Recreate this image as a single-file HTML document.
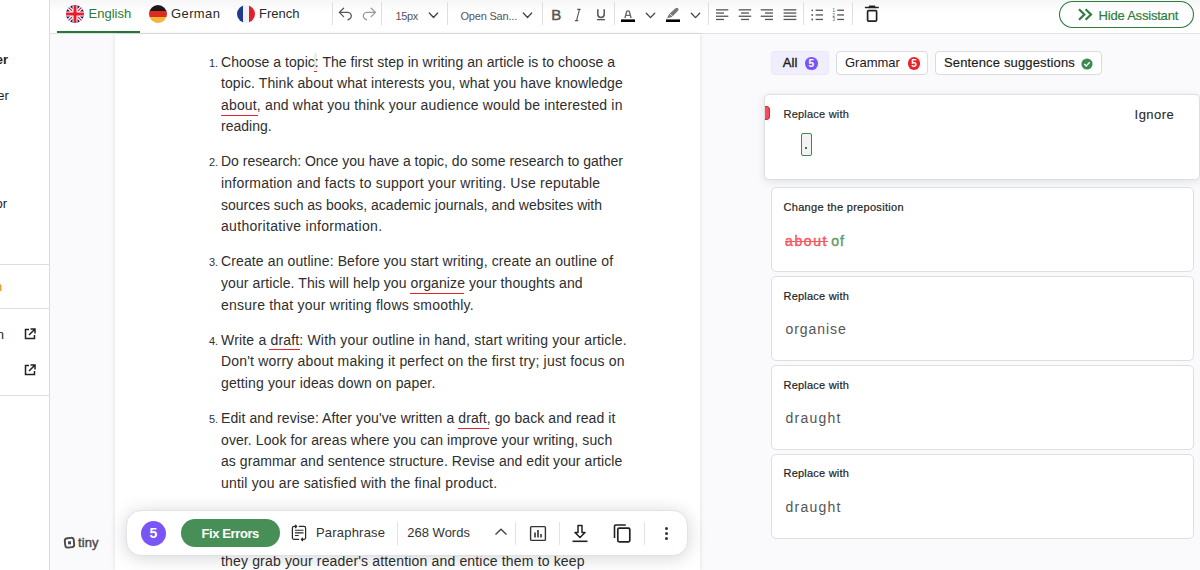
<!DOCTYPE html>
<html><head><meta charset="utf-8">
<style>
*{box-sizing:border-box;margin:0;padding:0}
html,body{width:1200px;height:570px;overflow:hidden;background:#fff;font-family:"Liberation Sans",sans-serif;color:#222}
.a{position:absolute}
#side{left:0;top:0;width:49px;height:570px;background:#fff}
#sideb{left:49px;top:0;width:1px;height:570px;background:#d9dce0}
.sep{height:1px;background:#dcdee2}
#tb{left:50px;top:0;width:1150px;height:33px;background:linear-gradient(#f6f6f7,#fff 12px)}
#tbb{left:50px;top:33px;width:1150px;height:1px;background:#dfe1e5}
#gray{left:50px;top:34px;width:1150px;height:536px;background:#fafafc}
#page{left:115px;top:34px;width:585px;height:536px;background:#fff;box-shadow:0 0 4px rgba(0,0,0,.12)}
.vs{width:1px;height:23px;top:2px;background:#dcdfe3}
.tt{font-size:14px;white-space:nowrap}
.t{white-space:nowrap;line-height:1}
.ln{position:absolute;left:221px;white-space:nowrap;font-size:14px;line-height:21.43px;height:21.43px;color:#2e2e2e}
.num{position:absolute;font-size:11px;color:#333;white-space:nowrap}
.ul{position:absolute;height:1px;background:#e8242b}
.chip{position:absolute;top:51px;height:24px;border-radius:4px;font-size:13px;white-space:nowrap}
.card{position:absolute;background:#fff;border:1px solid #dcdfe3;border-radius:5px}
.ct{position:absolute;left:11px;font-size:11.5px;color:#1e1e1e;white-space:nowrap}
.cw{position:absolute;left:13px;font-size:14.5px;color:#555;white-space:nowrap;letter-spacing:.3px}
</style></head><body>
<!-- left sidebar -->
<div id="side" class="a"></div>
<div id="sideb" class="a"></div>
<div class="a t" style="left:-4.3px;top:52.7px;font-size:13px;font-weight:bold;color:#1d1d1d">er</div>
<div class="a t" style="left:-2.8px;top:89px;font-size:13px;color:#1d1d1d">er</div>
<div class="a t" style="left:-4.5px;top:197px;font-size:13px;color:#1d1d1d">or</div>
<div class="a sep" style="left:0;top:264px;width:49px"></div>
<div class="a t" style="left:-5px;top:280px;font-size:13px;color:#e8870f">n</div>
<div class="a sep" style="left:0;top:308px;width:49px"></div>
<div class="a t" style="left:-3.2px;top:328.2px;font-size:13px;color:#1d1d1d">n</div>
<svg class="a" style="left:24px;top:328px" width="12" height="12" viewBox="0 0 12 12"><path d="M5 1.5H1.5v9h9V7" fill="none" stroke="#222" stroke-width="1.5"/><path d="M6.5 1h4.5v4.5M11 1L5 7" fill="none" stroke="#222" stroke-width="1.5"/></svg>
<svg class="a" style="left:24px;top:364px" width="12" height="12" viewBox="0 0 12 12"><path d="M5 1.5H1.5v9h9V7" fill="none" stroke="#222" stroke-width="1.5"/><path d="M6.5 1h4.5v4.5M11 1L5 7" fill="none" stroke="#222" stroke-width="1.5"/></svg>
<div class="a sep" style="left:0;top:395px;width:49px"></div>

<!-- toolbar -->
<div id="tb" class="a"></div>
<div id="tbb" class="a"></div>
<svg class="a" style="left:0;top:0" width="1200" height="34" viewBox="0 0 1200 34">
<defs><clipPath id="cUK"><circle cx="75" cy="14" r="9"/></clipPath><clipPath id="cDE"><circle cx="158" cy="14" r="9"/></clipPath><clipPath id="cFR"><circle cx="246" cy="14" r="9"/></clipPath></defs>
<g clip-path="url(#cUK)"><rect x="66" y="5" width="18" height="18" fill="#17195c"/><path d="M66 5L84 23M84 5L66 23" stroke="#fff" stroke-width="3.5"/><path d="M66 5L84 23M84 5L66 23" stroke="#e5202e" stroke-width="1.2"/><path d="M75 5V23M66 14H84" stroke="#fff" stroke-width="5"/><path d="M75 5V23M66 14H84" stroke="#e5202e" stroke-width="3"/></g>
<g clip-path="url(#cDE)"><rect x="149" y="5" width="18" height="6" fill="#1a1a1a"/><rect x="149" y="11" width="18" height="6" fill="#dd2c1e"/><rect x="149" y="17" width="18" height="6" fill="#f5b53a"/></g>
<g clip-path="url(#cFR)"><rect x="237" y="5" width="6" height="18" fill="#1f3a93"/><rect x="243" y="5" width="6" height="18" fill="#f2f2f2"/><rect x="249" y="5" width="6" height="18" fill="#e5202e"/></g>
<rect x="57" y="31" width="83" height="2" fill="#237a35"/>
<g fill="#dcdfe3"><rect x="332" y="2" width="1" height="23"/><rect x="381" y="2" width="1" height="23"/><rect x="447" y="2" width="1" height="23"/><rect x="542" y="2" width="1" height="23"/><rect x="614" y="2" width="1" height="23"/><rect x="708" y="2" width="1" height="23"/><rect x="803" y="2" width="1" height="23"/><rect x="852" y="2" width="1" height="23"/></g>
<g fill="none" stroke-width="1.3" stroke-linecap="round" stroke-linejoin="round">
<path d="M343.6 8.2L339.3 12.4L343.6 16.6M339.5 12.4H347A3.5 3.5 0 0 1 348.4 19.4L348 19.9" stroke="#555"/>
<path d="M371.2 8.2L375.5 12.4L371.2 16.6M375.3 12.4H367.6A3.5 3.5 0 0 0 366.2 19.4L366.6 19.9" stroke="#999"/>
<path d="M429.3 13L433.5 17.5L437.7 13" stroke="#444"/>
<path d="M523.3 13L527.5 17.5L531.7 13" stroke="#444"/>
<path d="M646.3 13.2L650.5 17.6L654.7 13.2" stroke="#444"/>
<path d="M691.3 13.2L695.5 17.6L699.7 13.2" stroke="#444"/>
</g>
<path d="M580.6 9.4H577.2M579.5 9.4L576.5 20.6M578.3 20.6H574.9" fill="none" stroke="#555" stroke-width="1.1"/>
<path d="M597.8 9.3V14.3a3.2 3.2 0 0 0 6.4 0V9.3" fill="none" stroke="#555" stroke-width="1.5"/>
<rect x="597" y="19" width="8" height="1.3" fill="#555"/>
<path d="M624.9 18L626.6 11.8Q627 10.8 628 10.8Q629 10.8 629.4 11.8L631.1 18M625.6 15.4H630.4" fill="none" stroke="#666" stroke-width="1.35"/>
<rect x="621" y="19.4" width="14" height="2.6" fill="#000"/>
<path d="M667 18.3L669.2 13.9L675.5 8.3a1.7 1.7 0 0 1 2.5 2.5L672 17L667 18.3Z" fill="#777"/>
<path d="M669.6 13.7L673.2 16.9" stroke="#fff" stroke-width=".8"/>
<rect x="666" y="19.4" width="14" height="2.6" fill="#000"/>
<g fill="#555">
<rect x="716" y="9.2" width="12.3" height="1.3"/><rect x="716" y="12.4" width="8" height="1.3"/><rect x="716" y="15.6" width="12.3" height="1.3"/><rect x="716" y="18.8" width="8" height="1.3"/>
<rect x="738.7" y="9.2" width="12.5" height="1.3"/><rect x="741" y="12.4" width="8" height="1.3"/><rect x="738.7" y="15.6" width="12.5" height="1.3"/><rect x="741" y="18.8" width="8" height="1.3"/>
<rect x="760.7" y="9.2" width="12.3" height="1.3"/><rect x="765" y="12.4" width="8" height="1.3"/><rect x="760.7" y="15.6" width="12.3" height="1.3"/><rect x="765" y="18.8" width="8" height="1.3"/>
<rect x="783.6" y="9.2" width="12.7" height="1.3"/><rect x="783.6" y="12.4" width="12.7" height="1.3"/><rect x="783.6" y="15.6" width="12.7" height="1.3"/><rect x="783.6" y="18.8" width="12.7" height="1.3"/>
<circle cx="812.2" cy="10.3" r=".9"/><circle cx="812.2" cy="15" r=".9"/><circle cx="812.2" cy="19.5" r=".9"/>
<rect x="815.6" y="9.6" width="7.4" height="1.3"/><rect x="815.6" y="14.3" width="7.4" height="1.3"/><rect x="815.6" y="18.8" width="7.4" height="1.3"/>
<rect x="837.2" y="9.6" width="6.8" height="1.3"/><rect x="837.2" y="14.3" width="6.8" height="1.3"/><rect x="837.2" y="18.8" width="6.8" height="1.3"/>
</g>
<text x="832.6" y="12" font-family="Liberation Sans" font-size="4.5" fill="#555">1</text><text x="832.4" y="16.6" font-family="Liberation Sans" font-size="4.5" fill="#555">2</text><text x="832.4" y="21" font-family="Liberation Sans" font-size="4.5" fill="#555">3</text>
<path d="M865.5 7.5H878.2M869.5 6.3H874.6" stroke="#222" stroke-width="1.5" stroke-linecap="round"/>
<rect x="867.6" y="10.6" width="9" height="10.5" rx="1" fill="none" stroke="#222" stroke-width="1.7"/>
<rect x="1059.5" y="1.5" width="134" height="26" rx="13" fill="none" stroke="#2e7d3e" stroke-width="1.1"/>
<path d="M1079 9.2L1084.4 14.5L1079 19.8M1085.6 9.2L1091 14.5L1085.6 19.8" fill="none" stroke="#2e7d3e" stroke-width="2.2"/>
</svg>
<div class="a t" style="left:88.5px;top:7px;font-size:13px;color:#2b7a38">English</div>
<div class="a t" style="left:171px;top:7px;font-size:13px;color:#2a2a2a;letter-spacing:.4px">German</div>
<div class="a t" style="left:259px;top:7px;font-size:13px;color:#2a2a2a">French</div>
<div class="a t" style="left:395.5px;top:10.5px;font-size:11px;color:#555;letter-spacing:-.4px">15px</div>
<div class="a t" style="left:460.5px;top:10.5px;font-size:11px;color:#555;letter-spacing:-.2px">Open San...</div>
<div class="a t" style="left:551.3px;top:7.4px;font-size:15px;color:#555;-webkit-text-stroke:.45px #555">B</div>
<div class="a t" style="left:1098.5px;top:9px;font-size:13px;color:#2e7d3e;letter-spacing:-.2px;-webkit-text-stroke:.2px #2e7d3e">Hide Assistant</div>
<div id="gray" class="a"></div>
<div id="page" class="a"></div>

<!-- editor text -->
<div id="text">

<div class="a" style="left:314px;top:53px;width:3px;height:17px;background:#ececec"></div>
<div class="ul" style="left:221px;top:115px;width:37px"></div>
<div class="ul" style="left:314px;top:71px;width:3px"></div>
<div class="ul" style="left:410px;top:293px;width:54px"></div>
<div class="ul" style="left:269px;top:349px;width:31px"></div>
<div class="ul" style="left:458px;top:428px;width:31px"></div>
<div class="ln" style="top:51.93px;letter-spacing:0.031px">Choose a topic: The first step in writing an article is to choose a</div>
<div class="ln" style="top:72.93px;letter-spacing:0.097px">topic. Think about what interests you, what you have knowledge</div>
<div class="ln" style="top:94.93px;letter-spacing:0.163px">about, and what you think your audience would be interested in</div>
<div class="ln" style="top:115.93px;letter-spacing:0.013px">reading.</div>
<div class="ln" style="top:150.93px;letter-spacing:-0.007px">Do research: Once you have a topic, do some research to gather</div>
<div class="ln" style="top:172.93px;letter-spacing:0.213px">information and facts to support your writing. Use reputable</div>
<div class="ln" style="top:194.93px;letter-spacing:-0.005px">sources such as books, academic journals, and websites with</div>
<div class="ln" style="top:215.93px;letter-spacing:0.311px">authoritative information.</div>
<div class="ln" style="top:250.93px;letter-spacing:0.119px">Create an outline: Before you start writing, create an outline of</div>
<div class="ln" style="top:272.93px;letter-spacing:0.094px">your article. This will help you organize your thoughts and</div>
<div class="ln" style="top:294.93px;letter-spacing:0.221px">ensure that your writing flows smoothly.</div>
<div class="ln" style="top:329.93px;letter-spacing:0.180px">Write a draft: With your outline in hand, start writing your article.</div>
<div class="ln" style="top:350.93px;letter-spacing:0.190px">Don&#39;t worry about making it perfect on the first try; just focus on</div>
<div class="ln" style="top:372.93px;letter-spacing:0.129px">getting your ideas down on paper.</div>
<div class="ln" style="top:407.93px;letter-spacing:0.088px">Edit and revise: After you&#39;ve written a draft, go back and read it</div>
<div class="ln" style="top:429.93px;letter-spacing:0.100px">over. Look for areas where you can improve your writing, such</div>
<div class="ln" style="top:450.93px;letter-spacing:0.058px">as grammar and sentence structure. Revise and edit your article</div>
<div class="ln" style="top:472.93px;letter-spacing:0.181px">until you are satisfied with the final product.</div>
<div class="ln" style="top:550.93px;letter-spacing:0.162px">they grab your reader&#39;s attention and entice them to keep</div>
<div class="num" style="left:209px;top:57.4px">1.</div>
<div class="num" style="left:209px;top:156.22px">2.</div>
<div class="num" style="left:209px;top:255.94px">3.</div>
<div class="num" style="left:209px;top:335.1px">4.</div>
<div class="num" style="left:209px;top:413.4px">5.</div>
</div>

<!-- right panel -->
<div id="panel">
<div class="chip" style="left:771px;width:58px;background:#f0eefd;border:1px dotted #e6e3f7"></div>
<div class="a t" style="left:782.8px;top:56px;font-size:13px;color:#1a1a1a;-webkit-text-stroke:.35px #1a1a1a;letter-spacing:.1px">All</div>
<div class="a" style="left:805px;top:57px;width:12.6px;height:12.6px;border-radius:50%;background:#7a55f5"></div>
<div class="a t" style="left:808.4px;top:58.6px;font-size:10px;font-weight:bold;color:#fff">5</div>
<div class="chip" style="left:836px;width:92px;background:#fff;border:1px solid #d9dbdf"></div>
<div class="a t" style="left:845px;top:56px;font-size:13px;color:#1a1a1a">Grammar</div>
<div class="a" style="left:907.8px;top:57px;width:12.6px;height:12.6px;border-radius:50%;background:#e9232a"></div>
<div class="a t" style="left:911.2px;top:58.6px;font-size:10px;font-weight:bold;color:#fff">5</div>
<div class="chip" style="left:935px;width:167px;background:#fff;border:1px solid #d9dbdf"></div>
<div class="a t" style="left:944px;top:56px;font-size:13px;color:#1a1a1a;letter-spacing:.15px;-webkit-text-stroke:.15px #1a1a1a">Sentence suggestions</div>
<svg class="a" style="left:1081px;top:57.5px" width="12" height="12" viewBox="0 0 12 12"><circle cx="6" cy="6" r="5.6" fill="#3d8b4f"/><path d="M3.3 6.1L5.2 7.9L8.7 4.3" fill="none" stroke="#fff" stroke-width="1.4"/></svg>

<div class="card" style="left:764px;top:94px;width:436px;height:86px;box-shadow:0 2px 8px rgba(0,0,0,.10)"></div>
<div class="a" style="left:765px;top:106px;width:4.5px;height:14px;background:#fb4c55;border:1.3px solid #e61f2a;border-left:none;border-radius:0 4px 4px 0"></div>
<div class="a t" style="left:783.5px;top:108.5px;font-size:11px;color:#2a2a2a;letter-spacing:.22px;-webkit-text-stroke:.2px #2a2a2a">Replace with</div>
<div class="a t" style="left:1134.6px;top:108px;font-size:13px;color:#2a2a2a;letter-spacing:.45px;-webkit-text-stroke:.1px #2a2a2a">Ignore</div>
<div class="a" style="left:801px;top:133px;width:11px;height:23px;border:1px solid #3b8a4d;border-radius:2px;background:#f3f3f3"></div>
<div class="a" style="left:805px;top:147px;width:2.2px;height:2px;background:#2f7d3f"></div>

<div class="card" style="left:771px;top:187px;width:423px;height:85px"></div>
<div class="a t" style="left:783.5px;top:201.7px;font-size:11px;color:#1e1e1e;letter-spacing:.3px;-webkit-text-stroke:.2px #1e1e1e">Change the preposition</div>
<div class="a t" style="left:785px;top:233.6px;font-size:14px;color:#f25a62;-webkit-text-stroke:.45px #f25a62;letter-spacing:1.6px;text-decoration:line-through">about</div>
<div class="a t" style="left:831.2px;top:233.6px;font-size:14px;color:#5f9e6e;-webkit-text-stroke:.45px #5f9e6e;letter-spacing:1px">of</div>

<div class="card" style="left:771px;top:276px;width:423px;height:85px"></div>
<div class="a t" style="left:783.5px;top:290.5px;font-size:11px;color:#1e1e1e;letter-spacing:.22px;-webkit-text-stroke:.2px #1e1e1e">Replace with</div>
<div class="a t" style="left:785.5px;top:321.6px;font-size:14px;color:#555;letter-spacing:.95px">organise</div>

<div class="card" style="left:771px;top:365px;width:423px;height:85px"></div>
<div class="a t" style="left:783.5px;top:379.5px;font-size:11px;color:#1e1e1e;letter-spacing:.22px;-webkit-text-stroke:.2px #1e1e1e">Replace with</div>
<div class="a t" style="left:785.5px;top:410.6px;font-size:14px;color:#555;letter-spacing:1.25px">draught</div>

<div class="card" style="left:771px;top:454px;width:423px;height:85px"></div>
<div class="a t" style="left:783.5px;top:467.8px;font-size:11px;color:#1e1e1e;letter-spacing:.22px;-webkit-text-stroke:.2px #1e1e1e">Replace with</div>
<div class="a t" style="left:785.5px;top:499.6px;font-size:14px;color:#555;letter-spacing:1.25px">draught</div>
</div>

<!-- bottom bar -->
<div id="bbar">
<div class="a" style="left:126px;top:510px;width:562px;height:46px;background:#fff;border:1px solid #dfe2e6;border-radius:15px;box-shadow:0 2px 18px rgba(0,0,0,.17)"></div>
<div class="a" style="left:140.5px;top:520.5px;width:25.5px;height:25.5px;border-radius:50%;background:#7a55f5"></div>
<div class="a t" style="left:149.5px;top:526px;font-size:14px;font-weight:bold;color:#fff">5</div>
<div class="a" style="left:181px;top:519px;width:98.5px;height:28px;border-radius:14px;background:#478f56"></div>
<div class="a t" style="left:181px;top:527px;width:98.5px;text-align:center;font-size:13px;font-weight:bold;color:#fff;letter-spacing:-.4px">Fix Errors</div>
<svg class="a" style="left:288px;top:522px" width="22" height="22" viewBox="288 522 22 22"><g fill="none" stroke="#2a2a2a" stroke-width="1.25" stroke-linecap="round" stroke-linejoin="round"><path d="M296.3 526.4H294a1.6 1.6 0 0 0 -1.6 1.6V537.8a1.6 1.6 0 0 0 1.6 1.6H298.6"/><path d="M299.3 526.4H304a1.6 1.6 0 0 1 1.6 1.6V537.8a1.6 1.6 0 0 1 -1.6 1.6H301.6"/><path d="M295.4 525.1L296.7 526.4L295.4 527.7M302.6 538.1L301.3 539.4L302.6 540.7"/></g><path d="M295 530.3H303.5M295 532.9H303.5M295 535.5H298.7" stroke="#2a2a2a" stroke-width="1.1"/></svg>
<div class="a t" style="left:316px;top:525.6px;font-size:13px;color:#333;letter-spacing:.2px">Paraphrase</div>
<div class="a" style="left:396.5px;top:522px;width:1px;height:23px;background:#e0e2e6"></div>
<div class="a t" style="left:407.3px;top:525.6px;font-size:13px;color:#333">268 Words</div>
<svg class="a" style="left:494px;top:527px" width="14" height="10" viewBox="0 0 14 10"><path d="M1.5 7.5L7 2.2L12.5 7.5" fill="none" stroke="#444" stroke-width="1.4"/></svg>
<div class="a" style="left:515px;top:522px;width:1px;height:23px;background:#e0e2e6"></div>
<svg class="a" style="left:529px;top:525px" width="18" height="17" viewBox="0 0 18 17"><rect x="1.6" y="1.6" width="14.8" height="13.8" rx="1" fill="none" stroke="#333" stroke-width="1.4"/><path d="M6 7.5V12.5M9 5V12.5M12 9V12.5" stroke="#333" stroke-width="1.6"/></svg>
<div class="a" style="left:559px;top:522px;width:1px;height:23px;background:#e0e2e6"></div>
<svg class="a" style="left:571px;top:524px" width="18" height="19" viewBox="0 0 18 19"><path d="M7 1.5H11V8.5H14L9 13.5L4 8.5H7Z" fill="none" stroke="#222" stroke-width="1.5" stroke-linejoin="round"/><path d="M1.5 17.3H16.5" stroke="#222" stroke-width="1.6"/></svg>
<svg class="a" style="left:612px;top:523px" width="20" height="20" viewBox="0 0 20 20"><path d="M2.5 15V3.2a1.2 1.2 0 0 1 1.2 -1.2H13.8" fill="none" stroke="#222" stroke-width="1.6"/><rect x="5.8" y="5.2" width="12" height="13.6" rx="1.3" fill="none" stroke="#222" stroke-width="1.7"/></svg>
<div class="a" style="left:644px;top:522px;width:1px;height:23px;background:#e0e2e6"></div>
<div class="a" style="left:665px;top:526.7px;width:3px;height:3px;border-radius:50%;background:#333"></div>
<div class="a" style="left:665px;top:531.5px;width:3px;height:3px;border-radius:50%;background:#333"></div>
<div class="a" style="left:665px;top:537.3px;width:3px;height:3px;border-radius:50%;background:#333"></div>
</div>
<svg class="a" style="left:62px;top:535px" width="15" height="15" viewBox="62 535 15 15"><rect x="65" y="538" width="9" height="9.4" rx="2.6" transform="rotate(-6 69.5 542.7)" fill="none" stroke="#4a4a4a" stroke-width="1.9"/><rect x="68" y="541.3" width="3" height="3" fill="#4a4a4a"/></svg>
<div class="a t" style="left:78px;top:536px;font-size:13px;color:#4a4a4a;-webkit-text-stroke:.4px #4a4a4a;letter-spacing:.1px">tiny</div>


</body></html>
